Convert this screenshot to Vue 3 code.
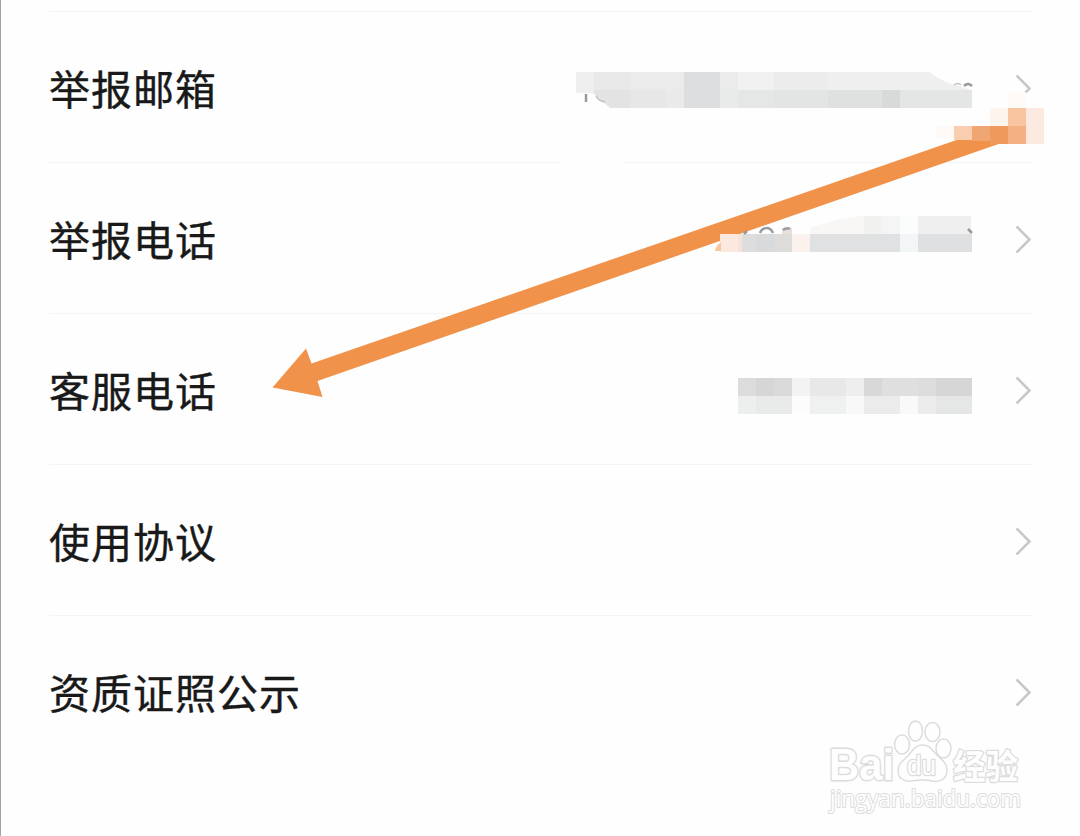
<template>
  <div class="page">
    <div class="list">
      <div v-for="item in items" :key="item" class="row">
        <span class="label">{{ item }}</span>
        <svg class="chevron" width="18" height="30" viewBox="0 0 18 30">
          <path d="M2.500 3.500 L15.500 16.500 L2.500 29.500" />
        </svg>
      </div>
    </div>

    <!-- Mosaico y flecha encima de la lista -->
    <svg class="marks" width="1080" height="836" viewBox="0 0 1080 836">
      <rect x="560" y="158" width="64" height="8" fill="#fefefe" />
      <polygon class="arrow" points="272.500,387.500 306,348.500 311.500,363.500 958,139.500 975,136 1000,140 1000,143.500 317.500,381 322.500,397" />
      <rect
        v-for="(c, i) in cells"
        :key="i"
        :x="c[0]"
        :y="c[1]"
        :width="c[2]"
        :height="c[3]"
        :fill="c[4]"
        shape-rendering="crispEdges"
      />
      <!-- Recortes del mosaico -->
      <path class="paper" d="M928 71 C936 77 944 82 954 84.500 C961 86 966 89 973 90 V71 Z" />
      <path class="paper" d="M575 93 H592 C600 97 604 104 612 109 H575 Z" />
      <path class="paper" d="M796 232 C815 226 836 218 870 215 H796 Z" />
      <path class="stroke" d="M586 94 V102" />
      <path class="stroke thin" d="M596 96 Q599 101 605 102" />
      <path class="stroke thin" d="M954 85 Q958 82 961 85" />
      <path class="stroke" d="M964 86 Q968 82 972 86" />
      <path class="stroke" d="M744 234 L747 231 M760 233 C762 227 770 226 773 233 M783 230 Q787 227 790 229 M968 229 L972 233" />
      <path d="M715 251 Q717 243 721 243 V251 Z" fill="#f8c69c" />
    </svg>

    <div class="watermark">
      <svg width="230" height="120" viewBox="0 0 230 120">
        <g class="mark">
          <text class="latin" x="9" y="70" textLength="65" lengthAdjust="spacingAndGlyphs">Bai</text>
          <ellipse cx="82" cy="34.500" rx="7.500" ry="9.500" />
          <ellipse cx="95.500" cy="21" rx="7" ry="10" />
          <ellipse cx="112.500" cy="22" rx="7.500" ry="9.500" />
          <ellipse cx="123.500" cy="38.500" rx="7.500" ry="9.500" />
          <path d="M102.500 35 C95 35 92 41 88 46 C83 51 78 53 78 61 C78 68 84 72 91 71 C98 70 105 69 112 71 C121 73 127 68 127 60 C127 53 122 50 118 46 C112 40 110 35 102.500 35 Z" />
          <text class="du" x="87" y="65" textLength="29" lengthAdjust="spacingAndGlyphs">du</text>
          <text class="han" x="133" y="69" textLength="65" lengthAdjust="spacingAndGlyphs">经验</text>
          <text class="url" x="10" y="97" textLength="191" lengthAdjust="spacingAndGlyphs">jingyan.baidu.com</text>
        </g>
      </svg>
    </div>
  </div>
</template>

<script setup>
const items = ['举报邮箱', '举报电话', '客服电话', '使用协议', '资质证照公示']

// x, y, ancho, alto, color
const cells = [
  [576, 72, 18, 22, '#efefef'],
  [594, 72, 36, 18, '#e9e9e9'],
  [630, 72, 54, 18, '#ebebeb'],
  [594, 90, 36, 18, '#e3e3e3'],
  [630, 90, 36, 18, '#e7e7e7'],
  [666, 90, 18, 18, '#eaeaea'],
  [684, 72, 36, 36, '#dcdee0'],
  [720, 72, 18, 18, '#ebebeb'],
  [738, 72, 36, 18, '#f1f1f1'],
  [774, 72, 54, 18, '#ececec'],
  [828, 72, 144, 18, '#efefef'],
  [720, 90, 18, 18, '#e9eaea'],
  [738, 90, 36, 18, '#e5e6e6'],
  [774, 90, 54, 18, '#e3e4e4'],
  [828, 90, 54, 18, '#dfe1e1'],
  [882, 90, 18, 18, '#d8dada'],
  [900, 90, 72, 18, '#e4e5e5'],

  [990, 108, 18, 18, '#fef4ee'],
  [1008, 92, 18, 16, '#fdfaf8'],
  [1008, 108, 18, 18, '#f8c5a0'],
  [1026, 108, 18, 36, '#fce9df'],
  [936, 126, 18, 12, '#fffaf6'],
  [954, 126, 18, 14, '#f8cdb0'],
  [972, 126, 18, 15, '#f0a672'],
  [990, 126, 18, 18, '#ee9a5c'],
  [1008, 126, 18, 18, '#f4b083'],

  [720, 234, 18, 18, '#fbe9df'],
  [738, 234, 4, 18, '#f5e3da'],
  [742, 234, 14, 18, '#dddddd'],
  [756, 234, 18, 18, '#d9dadb'],
  [774, 234, 18, 18, '#dedcdb'],
  [782, 228, 10, 6, '#e8dfda'],
  [792, 234, 18, 18, '#fbf2ed'],
  [810, 216, 54, 18, '#f8f7f6'],
  [864, 216, 18, 18, '#f1f1f0'],
  [882, 216, 18, 18, '#f5f5f5'],
  [900, 216, 18, 18, '#fbfcfc'],
  [918, 216, 53, 18, '#efefef'],
  [810, 234, 90, 18, '#dfe1e3'],
  [900, 234, 18, 18, '#f3f6f7'],
  [918, 234, 54, 18, '#dfe0e1'],

  [738, 378, 18, 18, '#dcdcdc'],
  [756, 378, 18, 18, '#d6d6d6'],
  [774, 378, 18, 18, '#dadada'],
  [792, 378, 18, 18, '#f3f3f3'],
  [810, 378, 36, 18, '#e7e8e7'],
  [846, 378, 18, 18, '#eeeeee'],
  [864, 378, 18, 18, '#d8d8d8'],
  [882, 378, 36, 18, '#dfdfdf'],
  [918, 378, 18, 18, '#dddddd'],
  [936, 378, 36, 18, '#d6d6d6'],
  [738, 396, 18, 18, '#edefee'],
  [756, 396, 36, 18, '#e9ebea'],
  [792, 396, 18, 18, '#fcfcfc'],
  [810, 396, 36, 18, '#eef1ef'],
  [846, 396, 18, 18, '#f8f8f8'],
  [864, 396, 36, 18, '#ebebeb'],
  [900, 396, 18, 18, '#f9f9f9'],
  [918, 396, 18, 18, '#ebeceb'],
  [936, 396, 36, 18, '#e5e7e6']
]
</script>

<style>
body {
  margin: 0;
  background: #fefefe;
}
</style>

<style scoped>
.page {
  position: relative;
  box-sizing: border-box;
  width: 1080px;
  height: 836px;
  overflow: hidden;
  border-left: 1px solid #a3a3a3;
  background: #fefefe;
  font-family: "Noto Sans CJK SC", sans-serif;
}

.list {
  padding: 11px 48px 0 48px;
}

.row {
  display: flex;
  align-items: center;
  justify-content: space-between;
  box-sizing: border-box;
  width: 983px;
  height: 151px;
  border-top: 1px solid #f4f4f4;
}

.label {
  color: #191919;
  font-size: 41px;
  line-height: 60px;
  letter-spacing: 1px;
  -webkit-text-stroke: 0.4px #191919;
}

.chevron {
  fill: none;
  stroke: #c8c8c8;
  stroke-width: 2.6;
}

.marks {
  position: absolute;
  top: 0;
  left: -1px;
}

.arrow {
  fill: #f1924b;
}

.paper {
  fill: #fefefe;
}

.stroke {
  fill: none;
  stroke: #9b9b9d;
  stroke-width: 2.5;
}

.thin {
  stroke: #c2c2c2;
  stroke-width: 1.5;
}

.watermark {
  position: absolute;
  left: 819px;
  top: 710px;
}

.mark {
  fill: #fefefe;
  stroke: #dcdcdc;
  stroke-width: 1.5;
  stroke-linejoin: round;
}

.mark text {
  paint-order: stroke;
}

.latin {
  font-family: "Liberation Sans", sans-serif;
  font-size: 45px;
  font-weight: 700;
  stroke-width: 3;
}

.du {
  font-family: "Liberation Sans", sans-serif;
  font-size: 27px;
  stroke-width: 2.6;
}

.han {
  font-family: "Noto Sans CJK SC", sans-serif;
  font-size: 34px;
  font-weight: 700;
  stroke-width: 2.6;
}

.url {
  font-family: "Open Sans", sans-serif;
  font-size: 23px;
  stroke-width: 2;
}
</style>
